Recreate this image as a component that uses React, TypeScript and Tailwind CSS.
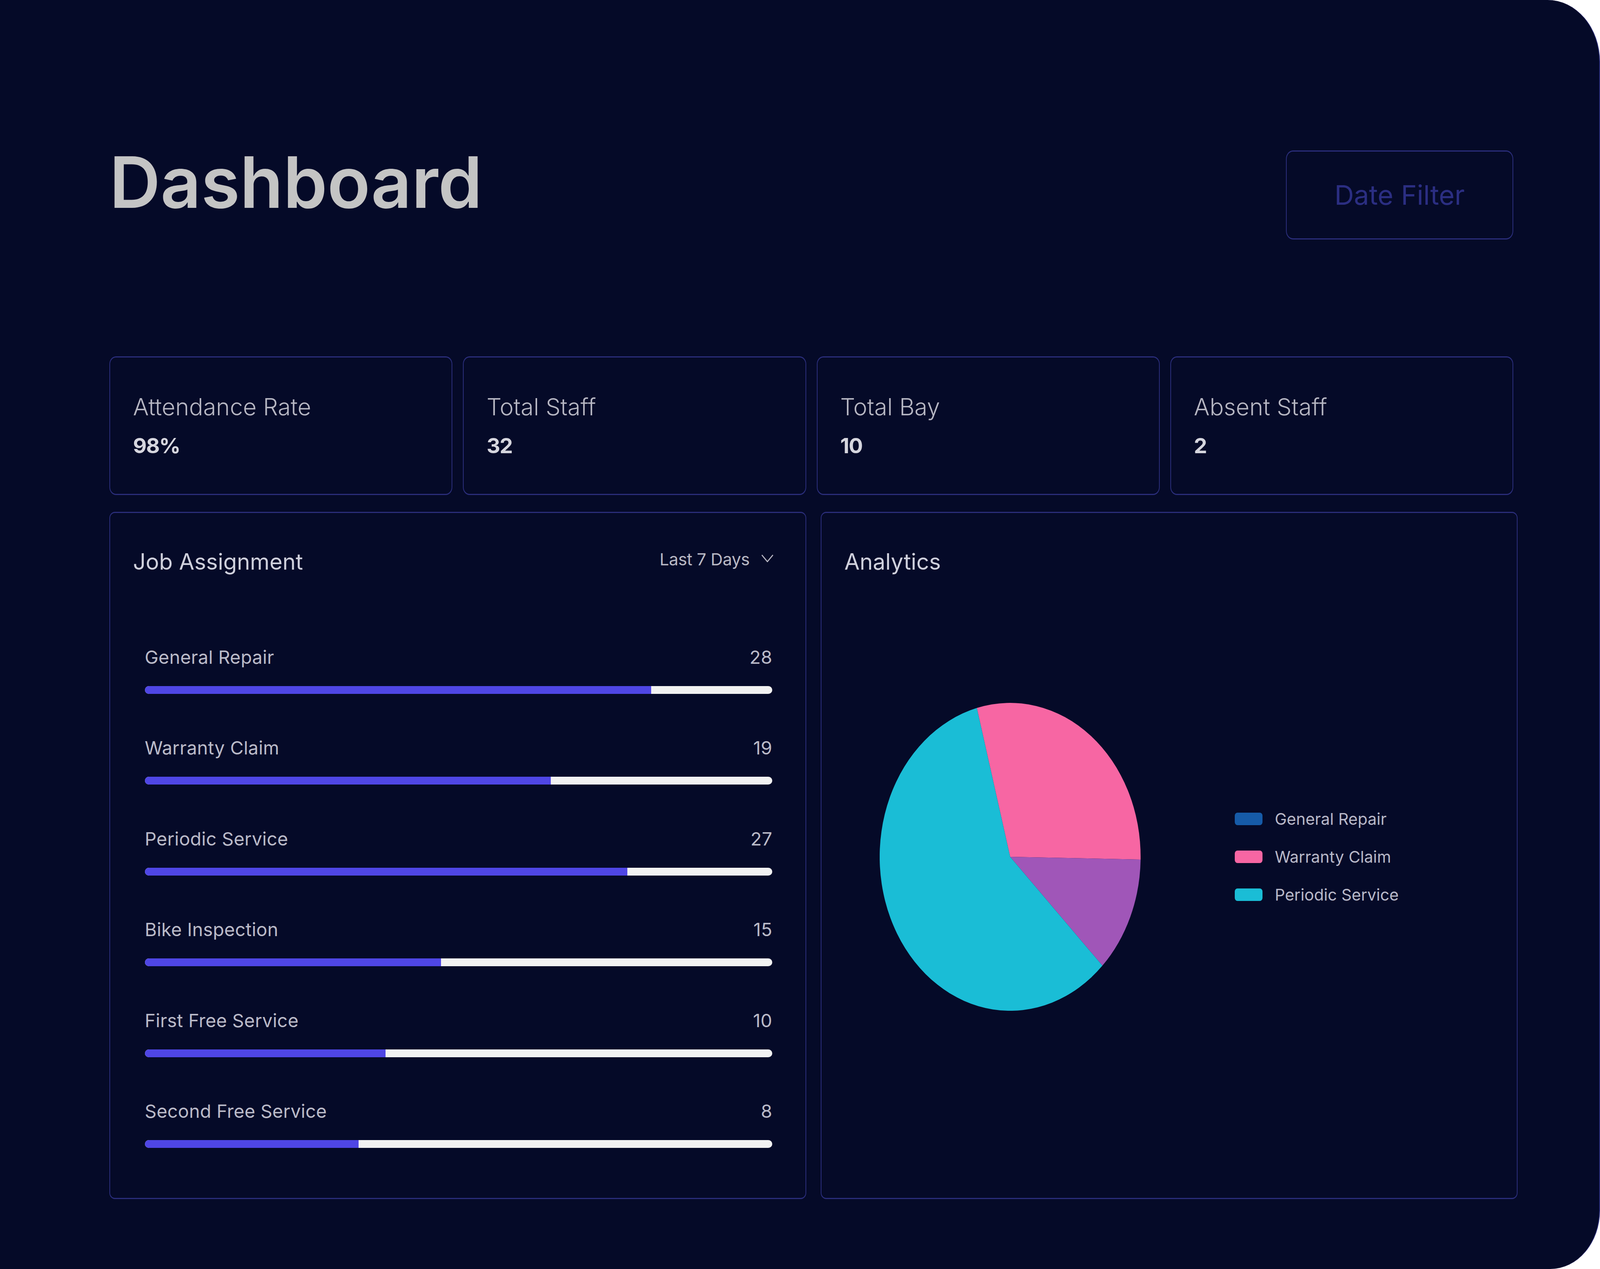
import React from "react";

const rows: [string, number, number][] = [
  ["General Repair", 28, 0.807],
  ["Warranty Claim", 19, 0.647],
  ["Periodic Service", 27, 0.769],
  ["Bike Inspection", 15, 0.472],
  ["First Free Service", 10, 0.384],
  ["Second Free Service", 8, 0.341],
];

const stats: [string, string][] = [
  ["Attendance Rate", "98%"],
  ["Total Staff", "32"],
  ["Total Bay", "10"],
  ["Absent Staff", "2"],
];

const legend: [string, string][] = [
  ["General Repair", "bg-[#165ba8]"],
  ["Warranty Claim", "bg-[#f766a3]"],
  ["Periodic Service", "bg-[#1abdd6]"],
];

function Pie() {
  return (
    <svg width="668" height="788" viewBox="0 0 788 788" preserveAspectRatio="none" className="shrink-0">
      <path d="M394 394 L293.4 13.1 A394 394 0 0 1 787.9 400.9 Z" fill="#f766a3" />
      <path d="M394 394 L787.9 400.9 A394 394 0 0 1 672.6 672.6 Z" fill="#a056b8" />
      <path d="M394 394 L672.6 672.6 A394 394 0 1 1 293.4 13.1 Z" fill="#1abdd6" />
    </svg>
  );
}

export default function App() {
  return (
    <div className="w-screen h-screen overflow-hidden bg-white font-['Inter',sans-serif]">
      <div className="w-full h-full bg-[#050a28] rounded-tr-[134px_158px] rounded-br-[127px_150px] border-r-[2.5px] border-[#2a2d7a] pl-[280px] pt-[369.5px]">
        <div className="w-[3594px] flex justify-between items-start">
          <h1 className="text-[181px] leading-[193px] font-semibold text-[#c4c4c4]">
            Dashboard
          </h1>
          <button className="mt-[15.5px] w-[582px] h-[228px] border-x-[2.5px] border-y-[3px] border-[#2a2d7a] rounded-[18px/22px] text-[69px] leading-[76px] text-[#2b2e82] flex items-center justify-center">
            Date Filter
          </button>
        </div>

        <div className="mt-[299px] w-[3594px] grid grid-cols-4 gap-[27px]">
          {stats.map(([label, value]) => (
            <div
              key={label}
              className="h-[355px] border-x-[2.5px] border-y-[3px] border-[#2a2d7a] rounded-[17px/20px] pl-[58.5px] pt-[94.5px] flex flex-col gap-[36.5px]"
            >
              <div className="text-[60px] leading-[62px] font-light text-[#b6b6c2]">
                {label}
              </div>
              <div className="text-[54px] leading-[66px] font-bold text-[#d6d6de] tracking-[-0.03em]">
                {value}
              </div>
            </div>
          ))}
        </div>

        <div className="mt-[43px] flex gap-[37px]">
          <div className="w-[1784px] h-[1759px] border-x-[2.5px] border-y-[3px] border-[#2a2d7a] rounded-[14px/16px] pl-[58.5px] pr-[82px] pt-[93.5px]">
            <div className="flex justify-between items-start">
              <div className="text-[57px] leading-[62px] text-[#cfd0dc]">Job Assignment</div>
              <div className="flex items-center gap-[30px] text-[43px] leading-[48px] text-[#b8b8c4] tracking-[-0.01em]">
                <span>Last 7 Days</span>
                <svg width="31" height="20" viewBox="0 0 36 20" preserveAspectRatio="none" className="mb-[4px]">
                  <polyline points="1.5,1.5 18,18.5 34.5,1.5" fill="none" stroke="#b8b8c4" strokeWidth="3" />
                </svg>
              </div>
            </div>
            <div className="mt-[187px] ml-[30px] mr-[3px] flex flex-col gap-[112.5px]">
              {rows.map(([label, value, frac]) => (
                <div key={label} className="flex flex-col gap-[48px]">
                  <div className="flex justify-between text-[47px] leading-[52px] text-[#babac8] tracking-[0.005em]">
                    <span>{label}</span>
                    <span>{value}</span>
                  </div>
                  <div className="h-[20px] rounded-full bg-[#f2f2f2] overflow-hidden">
                    <div className="h-full bg-[#4f46e5]" style={{ width: `${frac * 100}%` }} />
                  </div>
                </div>
              ))}
            </div>
          </div>

          <div className="w-[1784px] h-[1759px] border-x-[2.5px] border-y-[3px] border-[#2a2d7a] rounded-[14px/16px] pl-[58.5px] pt-[93.5px]">
            <div className="text-[57px] leading-[62px] text-[#cfd0dc]">Analytics</div>
            <div className="mt-[330.5px] ml-[90px] flex items-center gap-[241px]">
              <Pie />
              <div className="flex flex-col gap-[50px]">
                {legend.map(([label, color]) => (
                  <div key={label} className="flex items-center gap-[32px]">
                    <div className={`w-[71px] h-[32px] rounded-[7px/8px] ${color}`} />
                    <span className="text-[41px] leading-[47px] text-[#b8b8c8]">{label}</span>
                  </div>
                ))}
              </div>
            </div>
          </div>
        </div>
      </div>
    </div>
  );
}
